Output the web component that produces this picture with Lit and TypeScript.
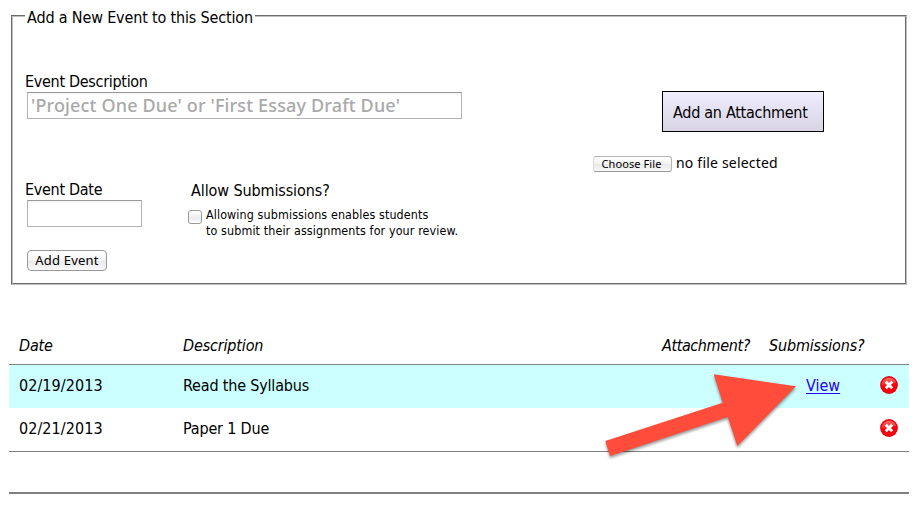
import { LitElement, html, css, svg } from "lit";
import { customElement, property } from "lit/decorators.js";

@customElement("delete-icon")
class DeleteIcon extends LitElement {
  static styles = css`
    :host { display: block; width: 18px; height: 18px; }
    svg { display: block; }
  `;
  render() {
    return html`<svg width="18" height="18" viewBox="0 0 18 18">
      <defs>
        <linearGradient id="gloss" x1="0" y1="0" x2="0" y2="1">
          <stop offset="0" stop-color="#ff8a8a" />
          <stop offset="1" stop-color="#f02a2a" />
        </linearGradient>
      </defs>
      <circle cx="9" cy="9" r="8.9" fill="#d80812" />
      <circle cx="9" cy="9" r="8" fill="#fa0008" />
      <path d="M1.4 9.6A7.7 7.7 0 0 1 16.4 7C12 6.6 7 10 1.4 9.6Z" fill="url(#gloss)" opacity=".75" />
      <path d="M6.8 6.8l4.4 4.4M11.2 6.8l-4.4 4.4" stroke="#fff" stroke-width="2.8" stroke-linecap="square" />
    </svg>`;
  }
}

interface EventItem { date: string; description: string; submissions: boolean; }

@customElement("event-table")
class EventTable extends LitElement {
  @property({ attribute: false }) events: EventItem[] = [];
  static styles = css`
    :host { display: block; margin: 40px 11px 0 9px; border-bottom: 2px solid #808080; padding-bottom: 40px; }
    .row { display: grid; grid-template-columns: 164px 479px 107px 128px 22px; align-items: center; height: 43px; padding-bottom: 3px; box-sizing: border-box; }
    .row > * { white-space: nowrap; }
    .row:not(.head) > span { padding-top: 2px; }
    .head { height: 40px; padding: 2px 0 0; font-style: italic; border-bottom: 1px solid #808080; }
    .shaded { background: #ccffff; }
    .last { height: 44px; border-bottom: 1px solid #808080; }
    .date, .desc { padding-left: 10px; }
    .date { letter-spacing: 0.07px; }
    .desc { letter-spacing: -0.18px; }
    .att { padding-left: 10px; }
    .sub { padding-left: 10px; }
    .head .date { letter-spacing: -0.2px; }
    .head .desc { letter-spacing: -0.15px; }
    .head .att { letter-spacing: -0.4px; }
    .head .sub { letter-spacing: -0.17px; }
    .row:not(.head) .sub { padding-left: 47px; }
    a { color: #2200ee; text-decoration: underline; text-underline-offset: 2px; }
    delete-icon { justify-self: start; margin-left: -7px; }
  `;
  render() {
    return html`
      <div class="row head">
        <span class="date">Date</span><span class="desc">Description</span>
        <span class="att">Attachment?</span><span class="sub">Submissions?</span><span></span>
      </div>
      ${this.events.map((e, i) => html`
        <div class="row ${i % 2 === 0 ? "shaded" : ""} ${i === this.events.length - 1 ? "last" : ""}">
          <span class="date">${e.date}</span><span class="desc">${e.description}</span><span></span>
          <span class="sub">${e.submissions ? html`<a href="#">View</a>` : ""}</span>
          <delete-icon></delete-icon>
        </div>`)}
    `;
  }
}

@customElement("app-root")
class AppRoot extends LitElement {
  static styles = css`
    :host { display: block; position: relative; height: 507px; overflow: hidden; background: #fff; color: #000;
      font: 16px/20px "DejaVu Sans Condensed", "DejaVu Sans", sans-serif; font-stretch: condensed; }
    .page { padding-top: 6px; }
    fieldset { margin: 0 13px 0 11px; padding: 0; border: 2px groove #c0c0c0;
      height: 279px; box-sizing: border-box; min-width: 0; }
    legend { margin-left: 12px; padding: 2px 2px 0; height: 20px; box-sizing: border-box; white-space: nowrap; letter-spacing: -0.16px; }
    .form { display: grid; grid-template-columns: 566px 1fr; padding: 46px 0 0 14px; }
    .label { display: block; margin-left: -2px; letter-spacing: -0.3px; white-space: nowrap; }
    input { display: block; box-sizing: border-box; margin: 0; border: 1px solid #b3b3b3; border-top-color: #999;
      border-radius: 0; outline: none; background: linear-gradient(#f3f3f3, #fff 3px); height: 27px; }
    .text { width: 435px; padding: 0 3px 2px; font: 500 18px "Noto Sans", sans-serif; letter-spacing: 0.15px; }
    .text::placeholder { color: #a9a9a9; opacity: 1; }
    .day { width: 115px; }
    .lower { display: grid; grid-template-columns: 161px 1fr; margin-top: 61px; }
    .allow { padding-top: 1px; }
    .allow .label { margin-left: 3px; letter-spacing: -0.1px; }
    .check { display: flex; gap: 4px; margin-top: 6px; font-size: 12.4px; line-height: 16px; white-space: nowrap; letter-spacing: 0.12px; }
    .box { width: 14px; height: 14px; border: 1px solid #999; border-radius: 3px; box-sizing: border-box; margin-top: 3px;
      background: linear-gradient(#fff, #ececec 60%, #fff); }
    button { box-sizing: border-box; margin: 0; padding: 0; color: #000; border: 1px solid #999; white-space: nowrap;
      font-family: "Noto Sans", sans-serif; background: linear-gradient(#fff, #f3f3f3 50%, #e9e9e9 52%, #f8f8f8); }
    .add { display: block; width: 80px; height: 21px; margin-top: 23px; border-radius: 4px; font-size: 13px; line-height: 17px; letter-spacing: 0.2px; }
    .attach { display: block; width: 162px; height: 41px; margin: 19px 0 0 69px; padding: 1px 0 0 10px; border: 1px solid #000; text-align: left;
      font: 16px "DejaVu Sans Condensed", "DejaVu Sans", sans-serif; letter-spacing: -0.28px; background: linear-gradient(#efedfe, #d8d4e4); }
    .file { display: flex; align-items: center; gap: 4px; margin-top: 21px; font: 14px/20px "Noto Sans", sans-serif; letter-spacing: 0.2px; }
    .choose { width: 79px; height: 16px; margin-top: 2px; border-color: #b5b5b5; border-left-color: #ddd; border-bottom-color: #999; border-radius: 3px; font-size: 11px; line-height: 14px; letter-spacing: 0.1px; padding-right: 2px; }
    .arrow { position: absolute; left: 595px; top: 365px; filter: drop-shadow(0 2px 1.5px rgba(0,0,0,.42)); pointer-events: none; }
  `;
  events: EventItem[] = [
    { date: "02/19/2013", description: "Read the Syllabus", submissions: true },
    { date: "02/21/2013", description: "Paper 1 Due", submissions: false },
  ];
  render() {
    return html`
      <div class="page">
        <fieldset>
          <legend>Add a New Event to this Section</legend>
          <div class="form">
            <div>
              <label class="label">Event Description</label>
              <input class="text" placeholder="'Project One Due' or 'First Essay Draft Due'" />
              <div class="lower">
                <div>
                  <label class="label">Event Date</label>
                  <input class="day" />
                  <button class="add">Add Event</button>
                </div>
                <div class="allow">
                  <span class="label">Allow Submissions?</span>
                  <div class="check"><span class="box"></span>
                    <span>Allowing submissions enables students<br />to submit their assignments for your review.</span></div>
                </div>
              </div>
            </div>
            <div>
              <button class="attach">Add an Attachment</button>
              <div class="file"><button class="choose">Choose File</button><span>no file selected</span></div>
            </div>
          </div>
        </fieldset>
        <event-table .events=${this.events}></event-table>
      </div>
      <svg class="arrow" width="210" height="100" viewBox="595 365 210 100">
        ${svg`<path d="M796 386.3L713.7 374.3L722.7 402.7L605.3 441L610 456L727.7 417L737.3 446Z" fill="#ff4c3b" />`}
      </svg>
    `;
  }
}
